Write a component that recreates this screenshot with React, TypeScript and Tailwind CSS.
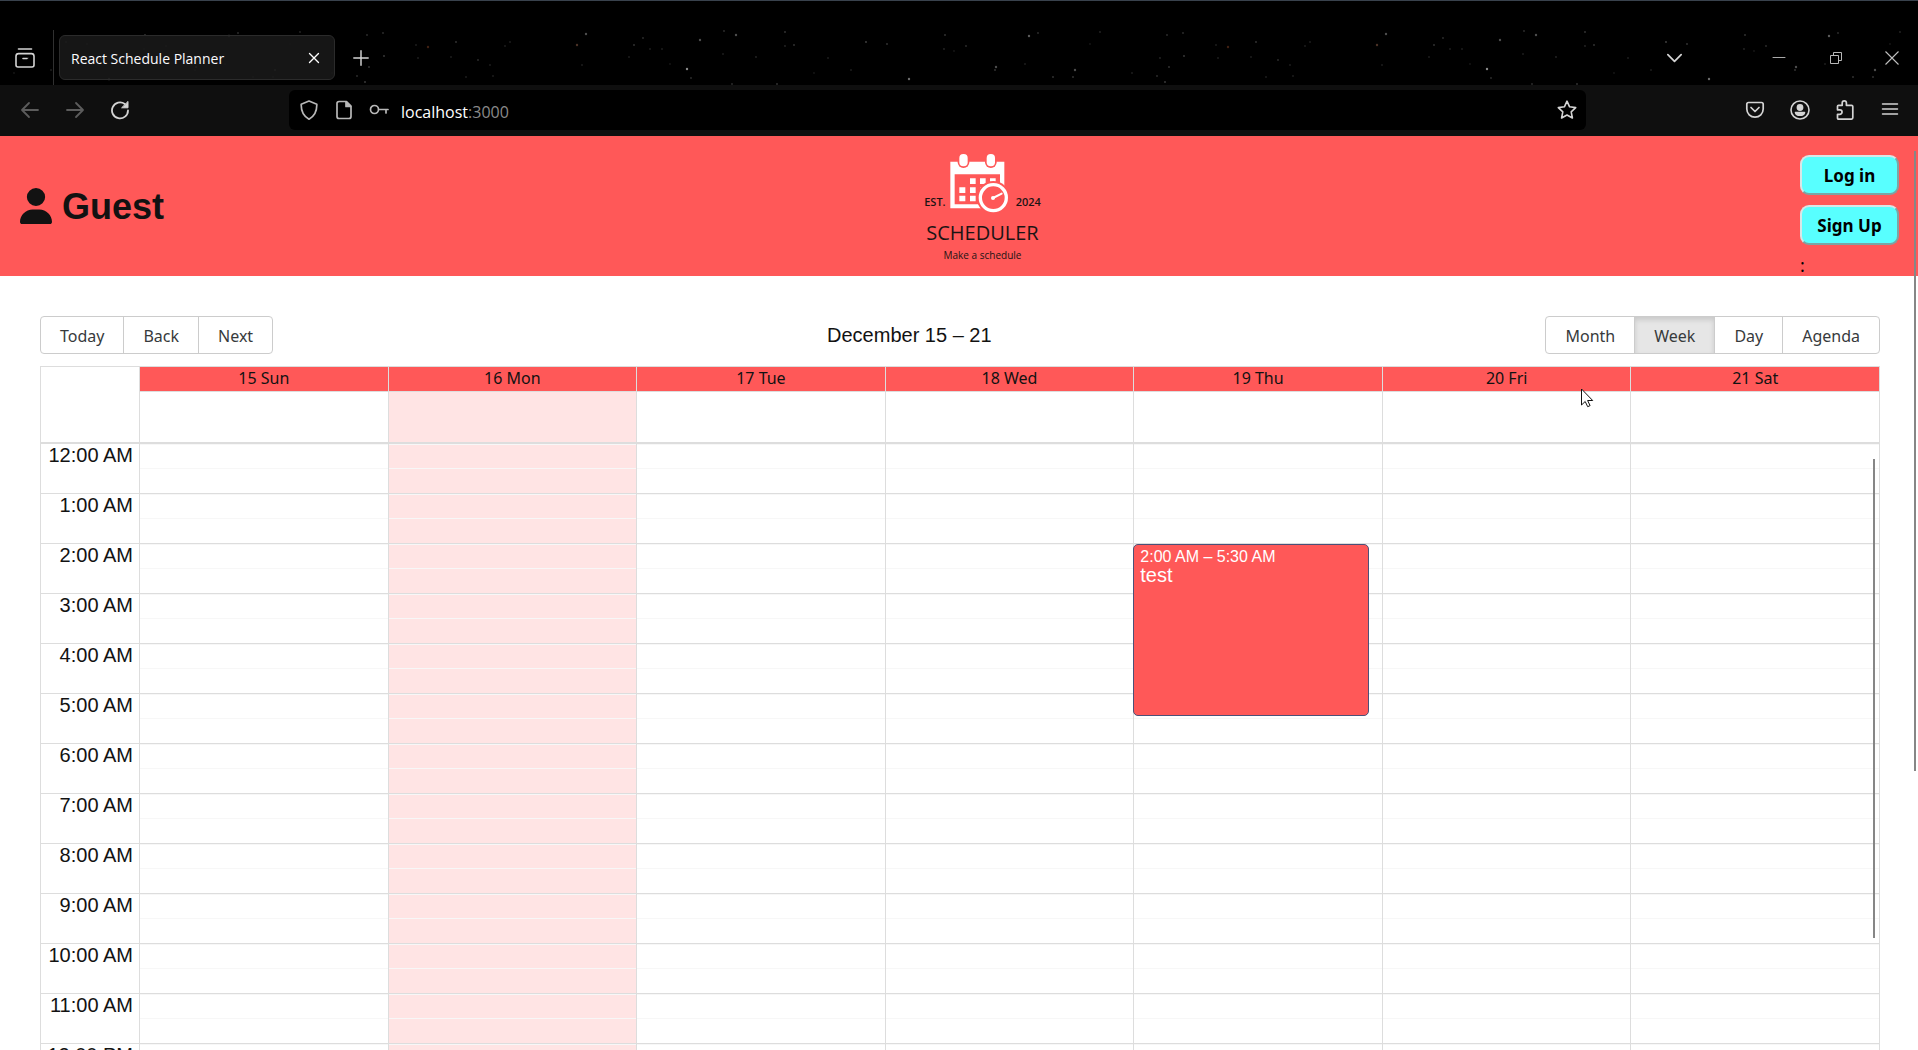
import React from "react";

const days = ["15 Sun", "16 Mon", "17 Tue", "18 Wed", "19 Thu", "20 Fri", "21 Sat"];
const hours = [
  "12:00 AM", "1:00 AM", "2:00 AM", "3:00 AM", "4:00 AM", "5:00 AM", "6:00 AM",
  "7:00 AM", "8:00 AM", "9:00 AM", "10:00 AM", "11:00 AM", "12:00 PM", "1:00 PM",
];
const today = 1;

const stars: [number, number, number, string][] = [
  [17, 45, 0.6, "#d08a6a"], [26, 34, 0.5, "#fff"], [74, 45, 0.35, "#fff"], [83, 38, 0.3, "#fff"],
  [140, 40, 0.5, "#fff"], [127, 69, 0.9, "#fff"], [131, 78, 0.3, "#fff"], [176, 35, 0.5, "#fff"],
  [164, 31, 0.3, "#fff"], [225, 32, 0.35, "#fff"], [225, 46, 0.25, "#fff"], [234, 45, 0.35, "#fff"],
  [196, 57, 0.25, "#fff"], [268, 58, 0.2, "#fff"], [254, 73, 0.15, "#fff"], [306, 42, 0.45, "#fff"],
  [327, 44, 0.35, "#fff"], [291, 70, 0.2, "#fff"], [349, 79, 0.7, "#fff"], [384, 49, 0.25, "#fff"],
  [385, 35, 0.35, "#fff"], [406, 46, 0.3, "#fff"], [394, 51, 0.15, "#fff"], [436, 67, 0.5, "#fff"],
  [435, 70, 0.35, "#fff"], [469, 36, 0.6, "#fff"], [478, 33, 0.3, "#fff"], [465, 64, 0.2, "#fff"],
  [493, 77, 0.35, "#fff"], [515, 70, 0.5, "#fff"], [513, 77, 0.35, "#fff"], [540, 32, 0.25, "#fff"],
  [530, 44, 0.15, "#fff"], [572, 73, 0.2, "#fff"], [597, 76, 0.3, "#fff"], [605, 82, 0.4, "#fff"],
  [609, 67, 0.35, "#fff"], [600, 58, 0.25, "#fff"], [607, 35, 0.3, "#fff"], [623, 33, 0.3, "#fff"],
  [624, 56, 0.4, "#fff"], [668, 47, 0.6, "#b05a30"], [656, 45, 0.2, "#fff"], [658, 58, 0.2, "#fff"],
  [696, 42, 0.35, "#fff"], [691, 57, 0.2, "#fff"], [718, 60, 0.3, "#fff"], [730, 65, 0.2, "#fff"],
  [745, 46, 0.2, "#fff"], [750, 42, 0.2, "#fff"], [733, 76, 0.2, "#fff"], [706, 77, 0.2, "#fff"],
  [22, 65, 0.2, "#fff"], [69, 57, 0.2, "#fff"], [90, 49, 0.2, "#fff"], [102, 49, 0.2, "#fff"],
  [163, 54, 0.2, "#fff"], [172, 84, 0.3, "#fff"], [217, 84, 0.35, "#fff"], [110, 64, 0.15, "#fff"],
];

function Icon({ size = 20, children, width = 1.6 }: { size?: number; children: React.ReactNode; width?: number }) {
  return (
    <svg width={size} height={size} viewBox="0 0 20 20" fill="none" stroke="currentColor" strokeWidth={width} strokeLinecap="round" strokeLinejoin="round" aria-hidden="true">
      {children}
    </svg>
  );
}

function IconButton({ label, className, children }: { label: string; className?: string; children: React.ReactNode }) {
  return (
    <button aria-label={label} className={`flex shrink-0 items-center justify-center ${className ?? ""}`}>
      {children}
    </button>
  );
}

function BrowserChrome() {
  return (
    <div className="relative shrink-0 border-t border-[#39424d] bg-black font-['Open_Sans',sans-serif] text-[#d4d4d4]">
      <svg className="pointer-events-none absolute inset-0 h-[84px] w-full opacity-60" aria-hidden="true">
        <defs>
          <pattern id="stars" x="560" y="0" width="800" height="90" patternUnits="userSpaceOnUse">
            {stars.map(([x, y, o, c], i) => (
              <circle key={i} cx={x} cy={y - 1} r={o > 0.45 ? 1.2 : 0.9} fill={c} opacity={o} />
            ))}
          </pattern>
        </defs>
        <rect width="100%" height="84" fill="url(#stars)" />
      </svg>

      <div className="relative flex h-[84px] items-stretch pt-[29px]">
        <IconButton label="Recent browsing" className="mr-[3px] w-[50px]">
          <Icon size={20}>
            <path d="M3.5 1h13" />
            <path d="M1 8.200V17a2 2 0 0 0 2 2h14a2 2 0 0 0 2-2V8.200a2.600 2.600 0 0 0-2.600-2.600H3.600A2.600 2.600 0 0 0 1 8.200zM8 10.500h4" />
          </Icon>
        </IconButton>
        <div className="w-px bg-[#303030]" />
        <div className="my-[5px] ml-[5px] flex w-[276px] items-center justify-between rounded-md border border-[#2b2b2b] bg-[#181818]/90 pr-[10px] pl-[11px]">
          <span className="pt-px text-[14px] text-[#fbfbfe]">React Schedule Planner</span>
          <IconButton label="Close tab" className="size-5 text-white">
            <Icon size={18} width={1.5}><path d="M5 5l10 10M15 5L5 15" /></Icon>
          </IconButton>
        </div>
        <IconButton label="New tab" className="ml-[13px] w-[26px]">
          <Icon size={16} width={1.8}><path d="M10 1v18M1 10h18" /></Icon>
        </IconButton>
        <div className="flex-1" />
        <IconButton label="List all tabs" className="w-10">
          <Icon size={19} width={1.8}><path d="M3 7l7 7 7-7" /></Icon>
        </IconButton>
        <IconButton label="Minimize" className="ml-[61px] w-12 text-[#a8a8a8]">
          <Icon size={20} width={1}><path d="M4 9.500h12" /></Icon>
        </IconButton>
        <IconButton label="Restore" className="ml-[9px] w-12 text-[#b8b8b8]">
          <svg width="14" height="14" viewBox="0 0 14 14" fill="none" stroke="currentColor" aria-hidden="true">
            <path d="M1.500 4.500h8v8h-8zM4.500 4.500v-3h8v8h-3" />
          </svg>
        </IconButton>
        <IconButton label="Close window" className="mr-[2px] ml-2 w-12 text-[#c0c0c0]">
          <svg width="14" height="14" viewBox="0 0 14 14" fill="none" stroke="currentColor" strokeWidth="1.100" aria-hidden="true">
            <path d="M.5.5l13 13M13.500.5l-13 13" />
          </svg>
        </IconButton>
      </div>

      <div className="relative flex h-[51px] items-center bg-[#0f0f0f] pb-[1px]">
        <div className="flex w-[289px] shrink-0 items-center gap-[25px] pl-5">
          <IconButton label="Back" className="size-5 text-[#5c5c5c]">
            <Icon size={20} width={1.8}><path d="M18 10H2.500M9 3l-7 7 7 7" /></Icon>
          </IconButton>
          <IconButton label="Forward" className="size-5 text-[#5c5c5c]">
            <Icon size={20} width={1.8}><path d="M2 10h15.500M11 3l7 7-7 7" /></Icon>
          </IconButton>
          <IconButton label="Reload" className="size-5">
            <Icon size={20} width={1.800}>
              <path d="M14.800 4A8 8 0 1 0 18 10.400" />
              <path d="M18 1.800v6h-6z" fill="currentColor" strokeWidth="1" />
            </Icon>
          </IconButton>
        </div>
        <div className="flex h-10 flex-1 items-center rounded-md bg-black px-[9px]">
          <IconButton label="Tracking protection" className="ml-[1px] size-5 text-[#b8b8b8]">
            <Icon size={20} width={1.700}><path d="M10 1l7.800 3.200C18 10.500 16 16 10 19.200 4 16 2 10.500 2.200 4.200z" /></Icon>
          </IconButton>
          <IconButton label="Site information" className="ml-[15px] size-5 text-[#b8b8b8]">
            <Icon size={20} width={1.700}>
              <path d="M5 1.500h7.500l4.500 4.500v10.500a2 2 0 0 1-2 2H5a2 2 0 0 1-2-2v-13a2 2 0 0 1 2-2z" />
              <path d="M12 2v4.500h4.500z" fill="currentColor" />
            </Icon>
          </IconButton>
          <IconButton label="Saved password" className="ml-[15px] size-5 text-[#b8b8b8]">
            <Icon size={20} width={1.700}><circle cx="5.500" cy="9.500" r="4" /><path d="M9.800 9.500H19M17 9.500v3.500M13.500 9.500" /></Icon>
          </IconButton>
          <div className="ml-3 pt-[3px] text-[16px] text-white">localhost<span className="text-[#8a8a8a]">:3000</span></div>
          <div className="flex-1" />
          <IconButton label="Bookmark" className="size-5">
            <Icon size={20} width={1.600}><path d="M10 1.200l2.600 5.600 6.100.8-4.500 4.200 1.200 6.200-5.400-3-5.400 3 1.200-6.200L1.300 7.600l6.100-.8z" /></Icon>
          </IconButton>
        </div>
        <div className="flex w-[332px] shrink-0 items-center justify-end gap-[25px] pr-[18px]">
          <IconButton label="Save to Pocket" className="size-5">
            <Icon size={20} width={1.700}><path d="M3.500 2.500h13A1.700 1.700 0 0 1 18.200 4.200V9a8.200 8.200 0 0 1-16.400 0V4.200A1.700 1.700 0 0 1 3.500 2.500zM6 7.500l4 4 4-4" /></Icon>
          </IconButton>
          <IconButton label="Account" className="size-5">
            <Icon size={20} width={1.600}>
              <circle cx="10" cy="10" r="9" />
              <circle cx="10" cy="7.500" r="2.600" fill="currentColor" />
              <path d="M5.500 12.500h9c-.4 2-2.300 2.800-4.500 2.800s-4.100-.8-4.500-2.800z" fill="currentColor" />
            </Icon>
          </IconButton>
          <IconButton label="Extensions" className="size-5">
            <Icon size={20} width={1.700}>
              <path d="M2.500 7.500V6.300a1 1 0 0 1 1-1H7.200V3a2 2 0 0 1 4.200 0v2.300h5.100a1.300 1.300 0 0 1 1.300 1.300v11.200a1.300 1.300 0 0 1-1.300 1.300H3.500a1 1 0 0 1-1-1v-3.800h2.300a2.200 2.200 0 0 0 0-4.500H2.500z" />
            </Icon>
          </IconButton>
          <IconButton label="Menu" className="size-5">
            <Icon size={20} width={1.500}><path d="M2.500 4h15M2.500 9h15M2.500 14h15" /></Icon>
          </IconButton>
        </div>
      </div>
    </div>
  );
}

function Logo() {
  return (
    <div className="flex flex-col items-center pt-[17px] font-['Open_Sans',sans-serif] text-[#1c1414]">
      <div className="flex items-end">
        <span className="mr-[3px] pb-[3px] text-[11px] leading-4 font-semibold">EST.</span>
        <svg width="60" height="60" viewBox="204 68 180 180" aria-hidden="true">
          <path fill="#fff" d="M208 94h162v140H208z" />
          <path fill="#ff5858" d="M221 132h136v90H221z" />
          <rect x="230" y="66" width="35" height="47" rx="17" fill="#ff5858" />
          <rect x="312" y="66" width="35" height="47" rx="17" fill="#ff5858" />
          <rect x="235" y="71" width="25" height="37" rx="12" fill="#fff" />
          <rect x="317" y="71" width="25" height="37" rx="12" fill="#fff" />
          <path fill="#fff" d="M267 144h17v17h-17zM297 144h17v17h-17zM327 144h17v17h-17zM235 171h18v17h-18zM267 171h17v17h-17zM297 171h17v17h-17zM235 196h18v17h-18zM267 196h17v17h-17z" />
          <circle cx="337" cy="202" r="50" fill="#ff5858" />
          <circle cx="337" cy="202" r="39" fill="#ff5858" stroke="#fff" strokeWidth="10" />
          <path d="M336 203l26-13" stroke="#fff" strokeWidth="6" strokeLinecap="round" />
          <circle cx="336" cy="203" r="6" fill="#fff" />
        </svg>
        <span className="ml-[7px] pb-[3px] text-[11px] leading-4 font-semibold">2024</span>
      </div>
      <div className="mt-[6px] text-[20px] leading-7">SCHEDULER</div>
      <div className="text-[10px] leading-4">Make a schedule</div>
    </div>
  );
}

function AppHeader() {
  const button =
    "h-10 w-[99px] shrink-0 rounded-[9px] border-2 border-t-[#d9e6e6] border-l-[#d9e6e6] border-r-[#7ba5a5] border-b-[#7ba5a5] bg-[#58ffff] pt-[2px] text-[17px] leading-6 font-bold text-black";
  return (
    <header className="flex h-[140px] shrink-0 justify-between bg-[#ff5858] pr-[19px] pl-5">
      <div className="flex w-[145px] items-center gap-[10px]">
        <svg width="32" height="36" viewBox="0 0 448 512" className="shrink-0" preserveAspectRatio="none" fill="#121212" aria-hidden="true">
          <path d="M224 256A128 128 0 1 0 224 0a128 128 0 1 0 0 256zm-45.700 48C79.800 304 0 383.800 0 482.300C0 498.700 13.300 512 29.700 512H418.300c16.400 0 29.700-13.300 29.700-29.700C448 383.800 368.200 304 269.700 304H178.300z" />
        </svg>
        <h1 className="pt-[2px] text-[36px] font-bold text-[#121212]">Guest</h1>
      </div>
      <Logo />
      <div className="flex flex-col items-start gap-[10px] pt-[19px] font-['Noto_Sans',sans-serif]">
        <button className={button}>Log in</button>
        <button className={button}>Sign Up</button>
        <span className="text-[18px] leading-5 text-black">:</span>
      </div>
    </header>
  );
}

function Toolbar() {
  const base = "h-[38px] border border-[#ccc] px-[19px] pt-[2px] text-[16px] text-[#373a3c] -ml-px";
  return (
    <div className="flex items-center font-['Noto_Sans',sans-serif]">
      <div className="flex pl-px">
        <button className={`${base} rounded-l`}>Today</button>
        <button className={base}>Back</button>
        <button className={`${base} rounded-r`}>Next</button>
      </div>
      <h2 className="flex-1 text-center font-['Liberation_Sans',sans-serif] text-[20px] text-[#121212]">December 15 – 21</h2>
      <div className="flex pl-px">
        <button className={`${base} rounded-l`}>Month</button>
        <button aria-pressed="true" className={`${base} relative border-[#adadad] bg-[#e6e6e6] shadow-[inset_0_3px_5px_rgba(0,0,0,0.125)]`}>Week</button>
        <button className={base}>Day</button>
        <button className={`${base} rounded-r`}>Agenda</button>
      </div>
    </div>
  );
}

function WeekView() {
  return (
    <div className="mt-3 border border-[#ddd]">
      <div className="flex border-b-2 border-[#ddd]">
        <div className="w-[98px] shrink-0" />
        <div className="grid flex-1 grid-cols-7">
          {days.map((day, i) => (
            <div key={day} className="border-l border-[#ddd]">
              <div className="h-[25px] border-b border-[#ddd] bg-[#ff5858] text-center font-['Noto_Sans',sans-serif] text-[16px] leading-[22px] text-[#121212]">{day}</div>
              <div className={i === today ? "h-[50px] bg-[#ffe4e4]" : "h-[50px]"} />
            </div>
          ))}
        </div>
      </div>
      <div className="relative flex">
        <div className="w-[98px] shrink-0">
          {hours.map((h) => (
            <div key={h} className="h-[50px] border-b border-[#ddd] pr-[6px] text-right text-[20px] leading-[22px] text-[#121212]">{h}</div>
          ))}
        </div>
        <div className="grid flex-1 grid-cols-7">
          {days.map((day, i) => (
            <div key={day} className={`relative border-l border-[#ddd] ${i === today ? "bg-[#ffe4e4]" : ""}`}>
              {hours.map((h) => (
                <div key={h} className="flex h-[50px] flex-col border-b border-[#ddd]">
                  <div className="h-6 border-t border-[#f7f7f7]" />
                  <div className="flex-1 border-t border-[#f7f7f7]" />
                </div>
              ))}
              {i === 4 && (
                <button className="absolute top-[100px] right-[13px] -left-px flex h-[172px] flex-col items-start rounded-[5px] border border-[#4c5078] bg-[#ff5858] px-[6px] pt-[3px] text-left text-white">
                  <span className="text-[16px] leading-[18px]">2:00 AM – 5:30 AM</span>
                  <span className="text-[20px] leading-[18px]">test</span>
                </button>
              )}
            </div>
          ))}
        </div>
        <div className="absolute top-[15px] right-[4px] h-[479px] w-[2px] bg-[#868686]" />
      </div>
    </div>
  );
}

export default function App() {
  return (
    <div className="flex h-screen flex-col overflow-hidden bg-white font-['Liberation_Sans',Arial,sans-serif]">
      <BrowserChrome />
      <div className="relative flex min-h-0 flex-1 flex-col overflow-hidden">
        <AppHeader />
        <main className="px-10 pr-[38px] pt-10">
          <Toolbar />
          <WeekView />
        </main>
        <div className="absolute top-[15px] right-[2px] h-[620px] w-[2px] bg-[#868686]" />
        <svg className="absolute top-[252px] right-[324px]" width="13" height="20" viewBox="0 0 13 20" fill="#fff" stroke="#111" aria-hidden="true">
          <path d="M.5 1v16l3.700-3.500 2.500 5.200 2.400-1.100-2.500-5.100h5.100z" />
        </svg>
      </div>
    </div>
  );
}
